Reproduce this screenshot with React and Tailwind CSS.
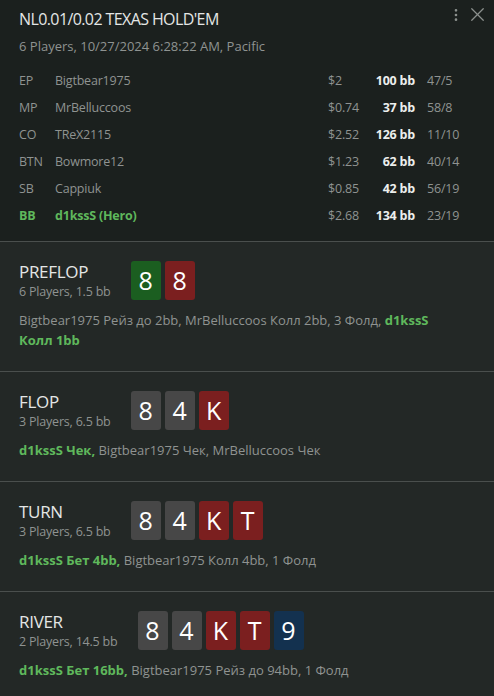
import { MoreVertical, X } from "lucide-react";

const players = [
  { pos: "EP", name: "Bigtbear1975", usd: "$2", bb: "100 bb", stat: "47/5" },
  { pos: "MP", name: "MrBelluccoos", usd: "$0.74", bb: "37 bb", stat: "58/8" },
  { pos: "CO", name: "TReX2115", usd: "$2.52", bb: "126 bb", stat: "11/10" },
  { pos: "BTN", name: "Bowmore12", usd: "$1.23", bb: "62 bb", stat: "40/14" },
  { pos: "SB", name: "Cappiuk", usd: "$0.85", bb: "42 bb", stat: "56/19" },
  { pos: "BB", name: "d1kssS (Hero)", usd: "$2.68", bb: "134 bb", stat: "23/19", hero: true },
];

const cardBg = {
  g: "bg-[#1b5e20]",
  r: "bg-[#7b1f1f]",
  n: "bg-[#474747]",
  b: "bg-[#13314f]",
};

// hero actions are kept as separate chunks so a wrapped line never splits one span
const streets = [
  {
    name: "PREFLOP",
    sub: "6 Players, 1.5 bb",
    cards: [["8", "g"], ["8", "r"]],
    pre: "Bigtbear1975 Рейз до 2bb, MrBelluccoos Колл 2bb, 3 Фолд, ",
    hero: ["d1kssS", "Колл 1bb"],
    post: "",
  },
  {
    name: "FLOP",
    sub: "3 Players, 6.5 bb",
    cards: [["8", "n"], ["4", "n"], ["K", "r"]],
    pre: "",
    hero: ["d1kssS Чек,"],
    post: " Bigtbear1975 Чек, MrBelluccoos Чек",
  },
  {
    name: "TURN",
    sub: "3 Players, 6.5 bb",
    cards: [["8", "n"], ["4", "n"], ["K", "r"], ["T", "r"]],
    pre: "",
    hero: ["d1kssS Бет 4bb,"],
    post: " Bigtbear1975 Колл 4bb, 1 Фолд",
  },
  {
    name: "RIVER",
    sub: "2 Players, 14.5 bb",
    cards: [["8", "n"], ["4", "n"], ["K", "r"], ["T", "r"], ["9", "b"]],
    pre: "",
    hero: ["d1kssS Бет 16bb,"],
    post: " Bigtbear1975 Рейз до 94bb, 1 Фолд",
  },
];

function Card({ v, c }) {
  return (
    <div
      className={`flex h-[39px] w-[30px] items-center justify-center rounded-[3px] text-[25px] leading-none text-white ${cardBg[c]}`}
    >
      {v}
    </div>
  );
}

export default function App() {
  return (
    <div
      className="min-h-[696px] w-[494px] bg-[#232826]"
      style={{ fontFamily: '"Open Sans", "Noto Sans", sans-serif' }}
    >
      <div className="relative h-[241px] bg-[#1b201e] px-[19px] pt-[7px]">
        <div className="absolute right-[5px] top-[3px] flex items-center gap-[2px] text-[#8b908d]">
          <MoreVertical size={16} strokeWidth={2} />
          <X size={23} strokeWidth={1.3} />
        </div>
        <div className="text-[16px] leading-[24px] tracking-[-0.6px] text-[#e4e6e5]">
          NL0.01/0.02 TEXAS HOLD'EM
        </div>
        <div className="mt-[6px] text-[13px] leading-[18px] text-[#8f9391]">
          6 Players, 10/27/2024 6:28:22 AM, Pacific
        </div>
        <div className="mt-[13px] flex flex-col">
          {players.map((p) => (
            <div key={p.pos} className="flex h-[27px] items-center text-[12.5px] tracking-[-0.2px]">
              <div
                className={`w-[36px] ${p.hero ? "font-bold text-[#5fb85c]" : "text-[#8f9391]"}`}
              >
                {p.pos}
              </div>
              <div
                className={`flex-1 ${p.hero ? "font-bold text-[#5fb85c]" : "text-[#8f9391]"}`}
              >
                {p.name}
              </div>
              <div className="w-[44px] text-[#8f9391]">{p.usd}</div>
              <div className="w-[43px] text-right font-bold text-[#eceeed]">{p.bb}</div>
              <div className="ml-[12px] w-[48px] text-[#8f9391]">{p.stat}</div>
            </div>
          ))}
        </div>
      </div>
      {streets.map((s, i) => (
        <div
          key={s.name}
          className={`border-t border-[#4a4f4d] pl-[19px] pr-[60px] pt-[17px] ${i === 0 ? "h-[130px]" : "h-[110px]"}`}
        >
          <div className="flex items-center gap-[20px]">
            <div className="flex flex-col pt-[2px]">
              <div className="text-[17px] leading-[22px] tracking-[-0.3px] text-[#e4e6e5]">{s.name}</div>
              <div className="text-[12.5px] leading-[18px] tracking-[-0.2px] text-[#8f9391]">{s.sub}</div>
            </div>
            <div className="flex gap-[4px]">
              {s.cards.map(([v, c], j) => (
                <Card key={j} v={v} c={c} />
              ))}
            </div>
          </div>
          <p className="mt-[9px] text-[13px] leading-[20px] text-[#8f9391]">
            {s.pre}
            {s.hero.map((h, j) => (
              <span key={j}>
                {j > 0 && " "}
                <span className="inline-block font-bold text-[#5fb85c]">{h}</span>
              </span>
            ))}
            {s.post}
          </p>
        </div>
      ))}
    </div>
  );
}
